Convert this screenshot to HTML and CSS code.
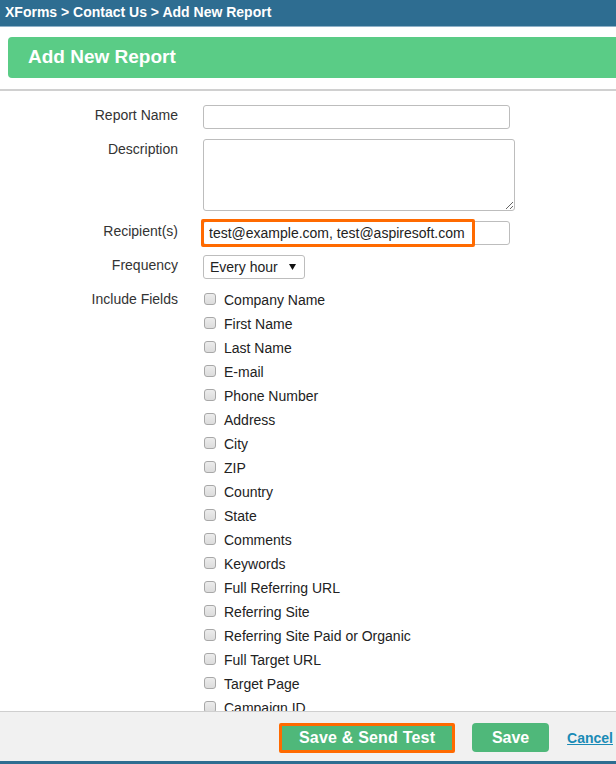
FILE: index.html
```html
<!DOCTYPE html>
<html lang="en">
  <head>
    <meta charset="UTF-8" />
    <title>XForms - Add New Report</title>
    <link rel="stylesheet" href="styles.css">
  </head>
  <body>
    <div class="breadcrumb">XForms &gt; Contact Us &gt; Add New Report</div>

    <h1 class="page-title">Add New Report</h1>
    <div class="divider"></div>

    <form class="report-form">
      <div class="form-row">
        <label class="form-label" for="report-name">Report Name</label>
        <input id="report-name" class="text-input" type="text" />
      </div>

      <div class="form-row">
        <label class="form-label" for="description">Description</label>
        <textarea id="description" class="text-area"></textarea>
      </div>

      <div class="form-row">
        <label class="form-label" for="recipients">Recipient(s)</label>
        <div class="highlight-wrap">
          <input id="recipients" class="text-input" type="text" value="test@example.com, test@aspiresoft.com" />
          <span class="highlight-box"></span>
        </div>
      </div>

      <div class="form-row">
        <label class="form-label" for="frequency">Frequency</label>
        <select id="frequency" class="select-input">
          <option>Every hour</option>
          <option>Every day</option>
          <option>Every week</option>
        </select>
      </div>

      <div class="form-row">
        <span class="form-label">Include Fields</span>
        <ul class="field-list">
          <li><label><input type="checkbox" /> Company Name</label></li>
          <li><label><input type="checkbox" /> First Name</label></li>
          <li><label><input type="checkbox" /> Last Name</label></li>
          <li><label><input type="checkbox" /> E-mail</label></li>
          <li><label><input type="checkbox" /> Phone Number</label></li>
          <li><label><input type="checkbox" /> Address</label></li>
          <li><label><input type="checkbox" /> City</label></li>
          <li><label><input type="checkbox" /> ZIP</label></li>
          <li><label><input type="checkbox" /> Country</label></li>
          <li><label><input type="checkbox" /> State</label></li>
          <li><label><input type="checkbox" /> Comments</label></li>
          <li><label><input type="checkbox" /> Keywords</label></li>
          <li><label><input type="checkbox" /> Full Referring URL</label></li>
          <li><label><input type="checkbox" /> Referring Site</label></li>
          <li><label><input type="checkbox" /> Referring Site Paid or Organic</label></li>
          <li><label><input type="checkbox" /> Full Target URL</label></li>
          <li><label><input type="checkbox" /> Target Page</label></li>
          <li><label><input type="checkbox" /> Campaign ID</label></li>
        </ul>
      </div>
    </form>

    <div class="footer-bar">
      <button class="green-button send-test-button" type="button">Save &amp; Send Test</button>
      <button class="green-button save-button" type="button">Save</button>
      <a class="cancel-link" href="#">Cancel</a>
    </div>
  </body>
</html>
```

FILE: styles.css
```css
/* add new report */

* {
  margin: 0;
  padding: 0;
  box-sizing: border-box;
  font-family: "Liberation Sans", Arial, sans-serif;
}

body {
  height: 764px;
  overflow: hidden;
  display: flex;
  flex-direction: column;
  background-color: #fff;
  color: #333;
  font-size: 14px;
}

.breadcrumb {
  flex-shrink: 0;
  height: 27px;
  padding-left: 5px;
  line-height: 24px;
  background-color: #2e6d91;
  border-bottom: 1px solid #8fb1c8;
  color: #fff;
  font-size: 14px;
  font-weight: 700;
}

.page-title {
  flex-shrink: 0;
  height: 41px;
  margin: 10px 0 0 8px;
  padding-left: 20px;
  line-height: 40px;
  background-color: #5acc86;
  border-radius: 4px 0 0 4px;
  color: #fff;
  font-size: 19px;
  font-weight: 700;
}

.divider {
  flex-shrink: 0;
  margin-top: 11px;
  border-top: 2px solid #d0d0d0;
}

/* form */
.report-form {
  flex: 1;
  overflow: hidden;
  padding-top: 14px;
}

.form-row {
  display: grid;
  grid-template-columns: 178px 1fr;
  column-gap: 25px;
  align-items: start;
  margin-bottom: 10px;
}

.form-label {
  text-align: right;
  line-height: 21px;
  color: #333;
}

.text-input {
  display: block;
  width: 307px;
  height: 24px;
  padding: 0 5px;
  border: 1px solid #bdbdbd;
  border-radius: 3px;
  font-size: 14px;
  color: #222;
  background-color: #fff;
}

.text-area {
  display: block;
  width: 312px;
  height: 72px;
  border: 1px solid #bdbdbd;
  border-radius: 3px;
  resize: vertical;
}

.highlight-wrap {
  position: relative;
}

/* annotation frame drawn over the field */
.highlight-box {
  position: absolute;
  left: -2px;
  top: -2px;
  width: 274px;
  height: 28px;
  border: 3px solid #ff6a00;
  border-radius: 2px;
  pointer-events: none;
}

.select-input {
  display: block;
  width: 102px;
  height: 24px;
  padding: 0 6px;
  border: 1px solid #bdbdbd;
  border-radius: 3px;
  font-size: 14px;
  color: #222;
  -webkit-appearance: none;
  appearance: none;
  background: #fff url("data:image/svg+xml;utf8,<svg xmlns='http://www.w3.org/2000/svg' width='7' height='6'><path d='M0 0h7L3.5 6z' fill='%23111'/></svg>") no-repeat right 8px center;
}

.field-list {
  list-style: none;
  margin-top: -1px;
}

.field-list li {
  height: 24px;
  line-height: 24px;
  color: #222;
}

.field-list label {
  display: flex;
  align-items: center;
}

.field-list input {
  -webkit-appearance: none;
  appearance: none;
  width: 12px;
  height: 12px;
  margin: 0 8px 2px 1px;
  border: 1px solid #a8a8a8;
  border-radius: 3px;
  background: linear-gradient(#ececec, #dcdcdc);
}

/* footer actions */
.footer-bar {
  flex-shrink: 0;
  display: flex;
  justify-content: flex-end;
  align-items: center;
  height: 53px;
  padding: 2px 3px 0 0;
  background-color: #f1f1f1;
  border-top: 1px solid #cfcfcf;
  border-bottom: 3px solid #2e6d91;
}

.green-button {
  height: 29px;
  border: none;
  border-radius: 4px;
  background-color: #4fb87a;
  color: #fff;
  font-size: 16px;
  font-weight: 700;
  line-height: 1;
  cursor: pointer;
}

.send-test-button {
  width: 176px;
  height: 30px;
  padding: 0;
  border: 3px solid #ff6a00;
  border-radius: 2px;
  letter-spacing: 0.2px;
}

.save-button {
  width: 77px;
  margin-left: 17px;
}

.cancel-link {
  margin-left: 18px;
  color: #1a8bb6;
  font-size: 14px;
  font-weight: 700;
}
```
